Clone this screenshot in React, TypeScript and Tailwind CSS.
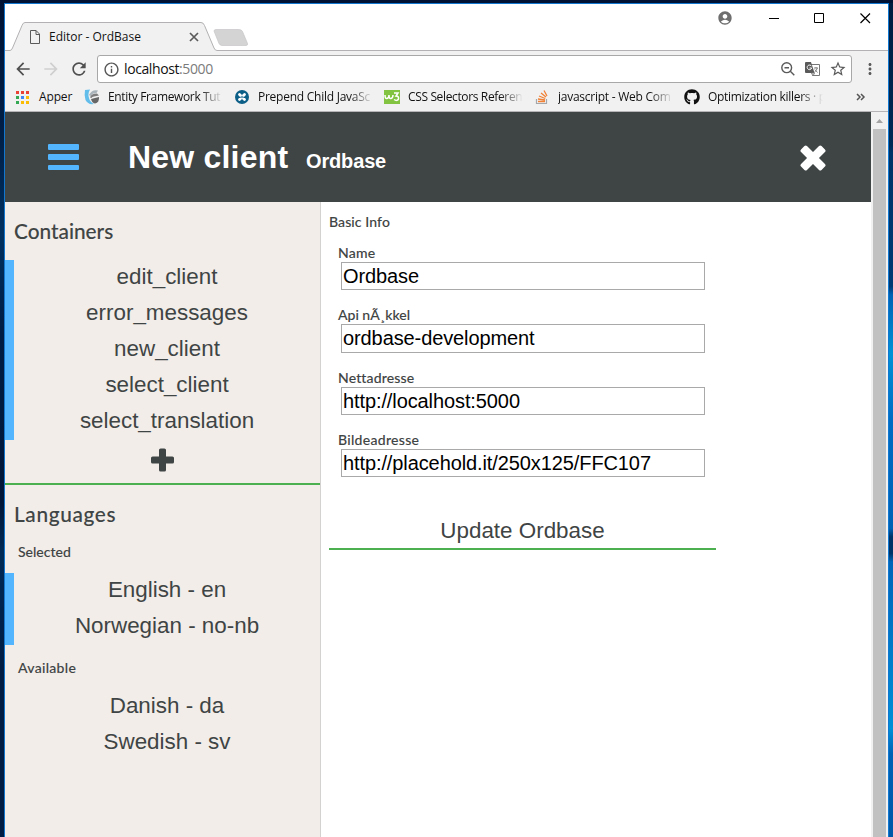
import React from "react";
import { FaGithub } from "react-icons/fa";
import { MdAccountCircle, MdArrowBack, MdArrowForward, MdRefresh, MdInfoOutline, MdStarBorder, MdMoreVert } from "react-icons/md";

const fade = "[mask-image:linear-gradient(to_right,black_80%,transparent)]";

function Bookmark({ icon, label, track }: { icon: React.ReactNode; label: string; track: string }) {
  return (
    <div className="flex w-[150px] shrink-0 items-center">
      <div className="flex w-6 shrink-0 items-center">{icon}</div>
      <div className={`w-[115px] whitespace-pre leading-4 ${fade} ${track}`}>{label}</div>
    </div>
  );
}

function Apps() {
  const colors = ["#ea4335", "#ea4335", "#ea4335", "#34a853", "#4285f4", "#fbbc05", "#34a853", "#fbbc05", "#fbbc05"];
  return (
    <svg width="13" height="13" className="shrink-0" shapeRendering="crispEdges">
      {colors.map((c, i) => (
        <rect key={i} x={(i % 3) * 5} y={Math.floor(i / 3) * 5} width="3" height="3" fill={c} />
      ))}
    </svg>
  );
}

const EntityIcon = (
  <svg width="16" height="16" viewBox="0 0 16 16">
    <path d="M1 1 L6 .5 Q3.500 5 5 9 Q6 13 10 15 Q4 16 1.500 11 Q0 6 1 1Z" fill="#62bdea" />
    <path d="M5 6 Q8 0 14 1.500 L12.500 4 Q9 3.500 6.500 7Z" fill="#a9b4ba" />
    <path d="M6 8.500 Q7 4.500 13 4.500 L15 6.500 L10 7.500 Q8 7.500 7.500 9Z" fill="#7d7d7d" />
    <path d="M7 10 L15 8 Q15.500 13.500 11 14.500 Q8 14 7 10Z" fill="#666" />
  </svg>
);
const DojoIcon = (
  <svg width="16" height="16" viewBox="0 0 16 16">
    <circle cx="8" cy="8" r="7" fill="#0c5f86" />
    <path d="M5.500 5.500 L10.500 10.500 M10.500 5.500 L5.500 10.500" stroke="#fff" strokeWidth="2.800" strokeLinecap="round" />
    <path d="M6 8 L8 6.500 L10 8 L8 9.500Z" fill="#0c5f86" opacity=".6" />
  </svg>
);
const W3Icon = (
  <svg width="16" height="14" viewBox="0 0 16 14">
    <rect width="16" height="14" fill="#82c341" />
    <path d="M1 5 Q1 9 3 8.500 Q5 8 5 5 Q5 9 7 8.500 Q9 8 9 5 M10 3 H14 L12 6 Q15 6 14.500 9 Q13 11.500 10 9.500" fill="none" stroke="#fff" strokeWidth="1.500" />
  </svg>
);
const StackIcon = (
  <svg width="16" height="16" viewBox="0 0 16 16">
    <path d="M2.500 10 V14.500 H12.500 V10" fill="none" stroke="#a5a8aa" strokeWidth="1.200" />
    <path d="M4 12.500 H11 M4 10 L11 11 M5 7 L11.300 9.500 M7 4 L12 8 M10 1.500 L13 7" stroke="#f08135" strokeWidth="1.300" />
  </svg>
);

function TranslateIcon() {
  return (
    <svg width="15" height="15" viewBox="0 0 15 15">
      <path d="M6 2.500 H14.500 V13.500 H7.500" fill="#fff" stroke="#777" />
      <path d="M1 0 H6 L9.500 11 H1 Q0 11 0 10 V1 Q0 0 1 0Z" fill="#5a5a5a" />
      <path d="M6.500 4.200 A2.300 2.300 0 1 0 6.700 6 H4.500" fill="none" stroke="#fff" />
      <path d="M9 6 H13 M11 5 V6 M12.300 6 Q11.500 9 9.500 10 M9.800 7.500 L12.500 10.500 M6.500 11 L9.500 11 L8 14Z" fill="none" stroke="#777" strokeWidth=".9" />
    </svg>
  );
}

function Browser() {
  return (
    <div className="h-[108px] shrink-0 border-b border-[#b6b4b6] bg-[#f2f1f2] font-['Open_Sans','Noto_Sans',sans-serif] text-[12px] text-[#111]">
      <div className="relative flex h-[47px] bg-white">
        <svg className="absolute left-0 top-0" width="883" height="47">
          <path d="M0 47 V46.500 H5 Q6.500 46.500 7.500 44 L17 21.500 Q18 18.500 20 18.500 H196 Q198.500 18.500 199.500 21.500 L209 44 Q210 46.500 212 46.500 H883 V47Z" fill="#f2f1f2" />
          <path d="M0 46.500 H5 Q6.500 46.500 7.500 44 L17 21.500 Q18 18.500 20 18.500 H196 Q198.500 18.500 199.500 21.500 L209 44 Q210 46.500 212 46.500 H883" fill="none" stroke="#b3b1b3" />
          <path d="M211 25.500 H234 Q236.500 25.500 237.500 27.500 L242.500 39.500 Q243 41.500 241 41.500 H217 Q215 41.500 214 39.500 L209 27 Q209 25.500 211 25.500Z" fill="#d5d4d5" stroke="#c7c6c7" strokeWidth=".7" />
        </svg>
        <div className="relative flex w-full pl-[25px] pt-[25px]">
          <svg width="10" height="14" className="mt-[1px]" fill="none" stroke="#5a5a5a">
            <path d="M.5.500 H6 L9.500 4 V13.500 H.5Z M6 .5 V4.500 H9.500" />
          </svg>
          <span className="ml-[9px] w-[140px] leading-4 tracking-[0px]">Editor - OrdBase</span>
          <svg width="10" height="10" className="mt-[3px]" stroke="#5a5a5a" strokeWidth="1.700"><path d="M1 1 L9 9 M9 1 L1 9" /></svg>
        </div>
        <div className="relative flex w-[192px] shrink-0 items-start pt-[6px]">
          <MdAccountCircle className="ml-[21px] h-4 w-4 shrink-0 text-[#6e6e6e]" />
          <svg width="110" height="15" className="ml-[33px] shrink-0" fill="none" stroke="#000">
            <path d="M3 8.500 H13" />
            <path d="M48.500 3.500 H57.500 V12.500 H48.500Z" />
            <path d="M94.500 3.500 L104 13 M104 3.500 L94.500 13" strokeWidth="1.200" />
          </svg>
        </div>
      </div>
      <div className="flex h-9 items-center">
        <MdArrowBack className="ml-2 h-5 w-5 text-[#4f4f4f]" />
        <MdArrowForward className="ml-2 h-5 w-5 text-[#d0cfd0]" />
        <MdRefresh className="ml-[8px] h-5 w-5 text-[#4f4f4f]" />
        <div className="ml-[8px] flex h-7 w-[755px] items-center rounded-[3px] border border-[#a9a8a9] bg-white">
          <MdInfoOutline className="ml-[5px] h-[17px] w-[17px] text-[#555]" />
          <span className="ml-[4px] grow pb-px text-[14px] tracking-[-0.4px]">localhost<span className="text-[#7b7b7b]">:5000</span></span>
          <svg width="14" height="14" fill="none" stroke="#5a5a5a" strokeWidth="1.400"><circle cx="5.700" cy="5.700" r="4.900" /><path d="M3.500 5.700 H8 M9.300 9.300 L13.300 13.300" /></svg>
          <span className="ml-[10px]"><TranslateIcon /></span>
          <MdStarBorder className="ml-[9px] mr-[4px] h-[18px] w-[18px] text-[#5a5a5a]" />
        </div>
        <MdMoreVert className="ml-[9px] h-[18px] w-[18px] text-[#5a5a5a]" />
      </div>
      <div className="flex h-[20px] items-center pl-[11px]">
        <Apps />
        <span className="ml-[10px] w-[45px] leading-4 tracking-[-0.15px]">Apper</span>
        <Bookmark icon={EntityIcon} label="Entity Framework Tut" track="tracking-[-0.36px]" />
        <Bookmark icon={DojoIcon} label="Prepend Child JavaSc" track="tracking-[-0.25px]" />
        <Bookmark icon={W3Icon} label="CSS Selectors Referen" track="tracking-[-0.36px]" />
        <Bookmark icon={StackIcon} label="javascript - Web Com" track="tracking-[-0.25px]" />
        <Bookmark icon={<FaGithub className="h-4 w-4" />} label="Optimization killers · p" track="tracking-[-0.3px]" />
        <svg width="10" height="8" className="ml-[22px]" fill="none" stroke="#555" strokeWidth="1.500"><path d="M1 1 L4 4 L1 7 M5 1 L8 4 L5 7" /></svg>
      </div>
    </div>
  );
}

function List({ items, marked, line = "leading-[34px]" }: { items: string[]; marked?: boolean; line?: string }) {
  return (
    <ul className={`border-l-[9px] text-center text-[22.4px] ${line} ${marked ? "border-[#54b5ff]" : "border-transparent"}`}>
      {items.map((t) => <li key={t} className="h-9">{t}</li>)}
    </ul>
  );
}

const lato = "font-['Lato',sans-serif] font-medium [-webkit-text-stroke:0.1px]";

function Sidebar() {
  return (
    <aside className="w-[316px] shrink-0 border-r border-[#d3d2d1] bg-[#f2ede9]">
      <h2 className={`${lato} h-[58px] pl-[9px] pt-[14px] text-[20.8px] leading-[30px]`}>Containers</h2>
      <List marked items={["edit_client", "error_messages", "new_client", "select_client", "select_translation"]} />
      <div className="flex h-[45px] justify-center border-b-2 border-[#4caf50] pt-[8px]">
        <svg width="23" height="24" fill="#3f4444"><rect y="8.500" width="23" height="7" rx="1.600" /><rect x="8" y=".5" width="7" height="23" rx="1.600" /></svg>
      </div>
      <h2 className={`${lato} pl-[9px] pt-[14px] text-[20.8px] leading-[30px] tracking-[0.65px]`}>Languages</h2>
      <h3 className={`${lato} h-11 pl-[13px] pt-[13px] text-[14px] leading-5`}>Selected</h3>
      <List marked items={["English - en", "Norwegian - no-nb"]} />
      <h3 className={`${lato} h-[43px] pl-[13px] pt-[13px] text-[14px] leading-5 tracking-[0.3px]`}>Available</h3>
      <List line="leading-[36px]" items={["Danish - da", "Swedish - sv"]} />
    </aside>
  );
}

function Field({ label, value, track = "", box = "h-7" }: { label: string; value: string; track?: string; box?: string }) {
  return (
    <div>
      <label className={`${lato} ${track} block h-[15px] text-[14px] leading-[12px]`}>{label}</label>
      <input readOnly defaultValue={value} className={`ml-[3px] block w-[364px] border border-[#a9a9a9] bg-white px-px pb-px text-[20px] tracking-[-0.1px] text-black ${box}`} />
    </div>
  );
}

export default function App() {
  return (
    <div className="flex h-[837px] w-[893px] overflow-hidden bg-[linear-gradient(#001233,#001f47_16%,#00305f_28%,#001c43_40%,#001638_60%,#002a55_66%,#001c43_80%,#001c43)] pl-1 pt-[3px] font-['Liberation_Sans',Arial,sans-serif] text-[#3f4444]">
      <div className="flex w-[885px] flex-col border-x border-t border-[#1277cf] bg-white">
        <Browser />
        <div className="flex min-h-0 grow">
          <div className="flex w-[866px] flex-col">
            <header className="flex h-[90px] shrink-0 items-center bg-[#3f4444] text-white">
              <svg width="32" height="28" className="ml-[43px]" fill="#54b5ff"><rect y="1" width="31" height="6" rx="1" /><rect y="11" width="31" height="6" rx="1" /><rect y="22" width="31" height="5" rx="1" /></svg>
              <h1 className="ml-[48px] flex items-baseline font-bold"><span className="w-[178px] text-[32px] tracking-[0.2px]">New client</span><span className="text-[20px] tracking-[-0.15px]">Ordbase</span></h1>
              <svg width="26" height="26" viewBox="-13 -13 26 26" className="ml-auto mr-[45px] mt-[2px]" fill="#fff"><g transform="rotate(45)"><rect x="-14.500" y="-4.200" width="29" height="8.400" rx="1.800" /><rect x="-4.200" y="-14.500" width="8.400" height="29" rx="1.800" /></g></svg>
            </header>
            <div className="flex grow">
              <Sidebar />
              <main className="w-[395px] pl-2">
                <h3 className={`${lato} h-[45px] pt-[10px] text-[14px] leading-5 tracking-[0.1px]`}>Basic Info</h3>
                <div className="flex h-[252px] flex-col gap-[19px] pl-[9px]">
                  <Field label="Name" value="Ordbase" track="tracking-[0.2px]" />
                  <Field label="Api nÃ¸kkel" value="ordbase-development" box="h-[29px]" />
                  <Field label="Nettadresse" value="http://localhost:5000" track="tracking-[0.15px]" />
                  <Field label="Bildeadresse" value="http://placehold.it/250x125/FFC107" track="tracking-[0.3px]" />
                </div>
                <button className="mt-[12px] block h-[39px] w-[387px] border-b-2 border-[#4caf50] pt-[2px] text-[22.4px] leading-9">Update Ordbase</button>
              </main>
            </div>
          </div>
          <div className="flex w-[17px] flex-col items-center bg-[#f1f1f1]">
            <svg width="17" height="17" className="shrink-0" fill="#a3a3a3"><path d="M5 11 L8.500 7 L12 11Z" /></svg>
            <div className="w-[13px] grow bg-[#c1c1c1]" />
          </div>
        </div>
      </div>
      <div className="w-1 bg-[linear-gradient(#001c40,#002a57_17%,#003468_18%,#003a74_34%,#0062b5_35%,#0092d6_42%,#006cc4_50%,#0062b5_63%,#003468_64%,#003468_66%,#0065b8_67%,#0090d8_87%,#0062b5_90%,#0058a8)]" />
    </div>
  );
}
